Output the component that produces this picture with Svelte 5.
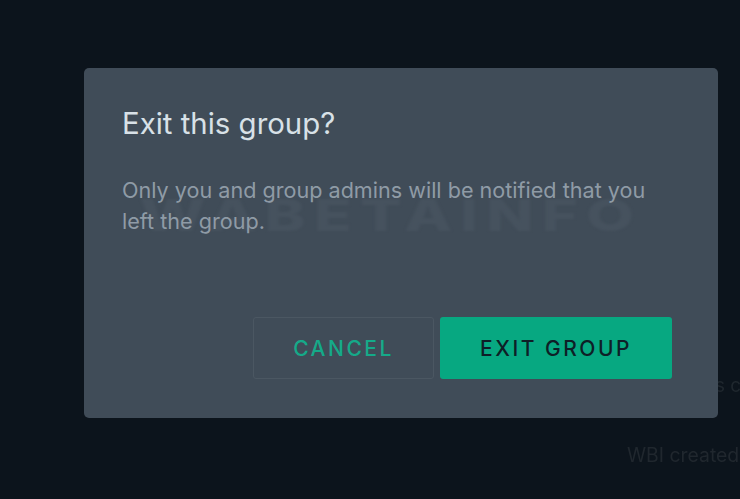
<script lang="ts">
  // Background chat hints that show through the overlay
  const title = 'Exit this group?';
  const message = 'Only you and group admins will be notified that you left the group.';
</script>

<div class="page">
  <span class="behind-tail">s c</span>
  <span class="behind-chip">WBI created</span>

  <div class="dialog" role="dialog">
    <span class="watermark">WABETAINFO</span>
    <h2>{title}</h2>
    <p>{message}</p>
    <div class="actions">
      <button class="cancel">CANCEL</button>
      <button class="exit">EXIT GROUP</button>
    </div>
  </div>
</div>

<style>
  :global(body) {
    margin: 0;
    background: #0c141c;
  }

  .page {
    position: relative;
    box-sizing: border-box;
    width: 740px;
    height: 499px;
    overflow: hidden;
    padding: 68px 22px 81px 84px;
    background: #0c141c;
    font-family: Inter, "Liberation Sans", sans-serif;
  }

  .behind-tail {
    position: absolute;
    left: 715px;
    top: 374px;
    font-size: 19px;
    color: #1f272e;
    white-space: nowrap;
    filter: blur(0.6px);
  }

  .behind-chip {
    position: absolute;
    left: 627px;
    top: 443px;
    font-size: 19.4px;
    color: #20272e;
    white-space: nowrap;
    filter: blur(0.6px);
  }

  .dialog {
    position: relative;
    box-sizing: border-box;
    height: 350px;
    padding: 38px 46px 39px 38px;
    display: flex;
    flex-direction: column;
    background: #404c58;
    border-radius: 5px;
  }

  .watermark {
    position: absolute;
    left: 56px;
    top: 120px;
    font-size: 44px;
    font-weight: 800;
    letter-spacing: 6px;
    color: #46525e;
    white-space: nowrap;
    transform: scaleX(1.4);
    transform-origin: left center;
    filter: blur(1px);
  }

  h2 {
    position: relative;
    margin: 0;
    font-size: 29.4px;
    font-weight: 400;
    line-height: 36px;
    color: #d8e1e7;
  }

  p {
    position: relative;
    margin: 33px 0 0;
    width: 540px;
    font-size: 21.6px;
    line-height: 31px;
    color: #8f9ba6;
  }

  .actions {
    margin-top: auto;
    display: flex;
    justify-content: flex-end;
    gap: 6px;
  }

  button {
    box-sizing: border-box;
    height: 62px;
    font-family: inherit;
    font-size: 21px;
    font-weight: 500;
    letter-spacing: 2.5px;
    border-radius: 3px;
  }

  .cancel {
    width: 181px;
    background: transparent;
    border: 1px solid #4b5762;
    color: #15aa89;
  }

  .exit {
    width: 232px;
    background: #07a881;
    border: none;
    color: #0e1f27;
  }
</style>
